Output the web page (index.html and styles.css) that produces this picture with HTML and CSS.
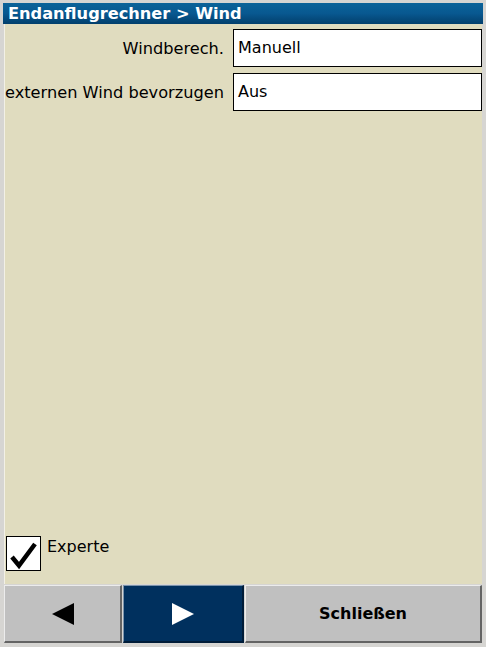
FILE: index.html
```html
<!DOCTYPE html>
<html lang="de">
<head>
<meta charset="utf-8">
<title>Endanflugrechner &gt; Wind</title>
<link rel="stylesheet" href="styles.css">
</head>
<body>
<div class="window">
  <div class="titlebar">Endanflugrechner &gt; Wind</div>
  <div class="content">
    <div class="form">
      <div class="label">Windberech.</div>
      <div class="field">Manuell</div>
      <div class="label">externen Wind bevorzugen</div>
      <div class="field">Aus</div>
    </div>
    <div class="check-row">
      <div class="checkbox">
        <svg width="33" height="33" viewBox="0 0 33 33"><path d="M5 20 L12 28.5 L28 7" fill="none" stroke="#000" stroke-width="4.5" stroke-linejoin="miter"/></svg>
      </div>
      <span class="check-label">Experte</span>
    </div>
  </div>
  <div class="buttons">
    <div class="btn">
      <svg width="22" height="22" viewBox="0 0 22 22"><polygon points="0,11 22,0 22,22" fill="#000"/></svg>
    </div>
    <div class="btn btn-active">
      <svg width="22" height="22" viewBox="0 0 22 22"><polygon points="22,11 0,0 0,22" fill="#fff"/></svg>
    </div>
    <div class="btn btn-text">Schließen</div>
  </div>
</div>
</body>
</html>
```
FILE: styles.css
```css
html, body {
  margin: 0;
  padding: 0;
}
body {
  background: #d6d5d2;
  font-family: "DejaVu Sans", sans-serif;
  font-size: 16px;
  color: #000;
  width: 486px;
  height: 647px;
  overflow: hidden;
}
.window {
  margin: 3px 3px 0 3px;
  height: 640px;
  display: flex;
  flex-direction: column;
}
.titlebar {
  height: 21px;
  line-height: 21px;
  padding-left: 5px;
  color: #fff;
  font-weight: bold;
  font-size: 16.2px;
  background: linear-gradient(to bottom, #0b6399 0%, #085890 50%, #023f6c 100%);
}
.content {
  flex: 1;
  margin: 0 1px;
  background: #e0dcbf;
  border-left: 1px solid #f2f0e6;
  display: flex;
  flex-direction: column;
  justify-content: space-between;
  padding: 5px 0 13px 0;
}
.form {
  display: grid;
  grid-template-columns: auto 1fr;
  column-gap: 9px;
  row-gap: 6px;
  align-items: center;
}
.label {
  text-align: right;
  font-size: 16.2px;
}
.field {
  height: 36px;
  line-height: 36px;
  border: 1px solid #000;
  background: #fff;
  padding-left: 4px;
}
.check-row {
  display: flex;
  align-items: center;
  gap: 6px;
  padding-left: 1px;
}
.checkbox {
  width: 33px;
  height: 33px;
  border: 1px solid #000;
  background: #fff;
  display: flex;
}
.check-label {
  align-self: flex-start;
  margin-top: 1px;
}
.buttons {
  height: 58px;
  margin: 1px 1px 0 1px;
  display: grid;
  grid-template-columns: 118px 121px 1fr;
  column-gap: 1px;
}
.btn {
  background: #c0c0c0;
  border-top: 1px solid #ececec;
  border-left: 1px solid #ececec;
  border-right: 2px solid #646464;
  border-bottom: 2px solid #646464;
  display: flex;
  align-items: center;
  justify-content: center;
}
.btn-active {
  background: #00305e;
  border-top-color: #7b93ab;
  border-left-color: #7b93ab;
  border-right-color: #001c38;
  border-bottom-color: #001c38;
}
.btn-text {
  font-weight: bold;
  font-size: 16px;
}
```
